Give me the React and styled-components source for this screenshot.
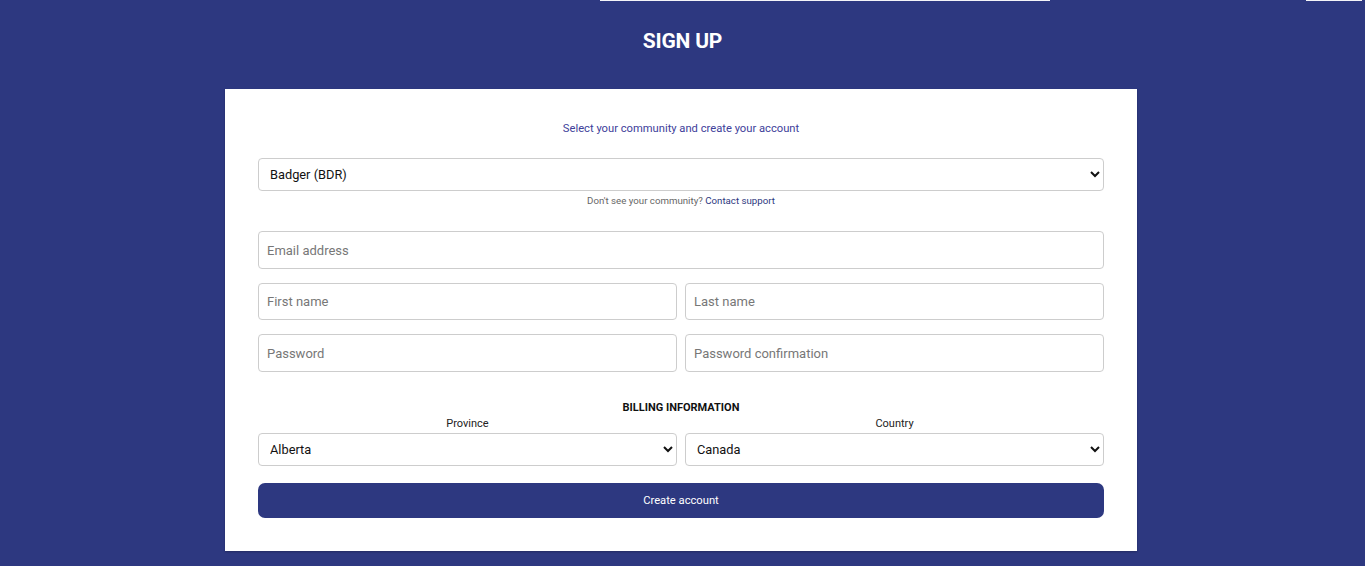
import React from "react";
import styled, { createGlobalStyle } from "styled-components";

const GlobalStyle = createGlobalStyle`
  html, body {
    margin: 0;
    padding: 0;
    background: #2d3880;
    font-family: Roboto, "Liberation Sans", sans-serif;
  }
`;

const Page = styled.div`
  min-height: 566px;
  background: #2d3880;
  display: flex;
  flex-direction: column;
  align-items: center;
`;

const TopEdge = styled.div`
  align-self: stretch;
  height: 1px;
  display: flex;
`;

const Edge = styled.span`
  width: ${(p) => p.$w}px;
  flex: ${(p) => (p.$w ? "none" : "1")};
  background: ${(p) => (p.$light ? "#f4f4f8" : "#2d3880")};
`;

const Title = styled.h1`
  margin: 0;
  padding-top: 28px;
  height: 88px;
  box-sizing: border-box;
  color: #fff;
  font-size: 21px;
  font-weight: 700;
  line-height: 24px;
  letter-spacing: -0.2px;
`;

const Card = styled.div`
  width: 912px;
  margin-right: 3px;
  box-sizing: border-box;
  background: #fff;
  padding: 33px;
  box-shadow: 0 1px 2px rgba(0, 0, 0, 0.25);
  display: flex;
  flex-direction: column;
`;

const Intro = styled.p`
  margin: 0 0 22px;
  text-align: center;
  font-size: 11.2px;
  line-height: 14px;
  color: #40409a;
`;

const Field = styled.select`
  width: 100%;
  height: 33px;
  box-sizing: border-box;
  border: 1px solid #cdcdcd;
  border-radius: 4px;
  background: #fff;
  padding: 0 7px;
  font-family: Roboto, "Liberation Sans", sans-serif;
  font-size: 12.8px;
  color: #111;
`;

const Hint = styled.p`
  margin: 4px 0 24px;
  text-align: center;
  font-size: 9.7px;
  line-height: 12px;
  color: #666;

  a {
    color: #2d3880;
    text-decoration: none;
  }
`;

const Input = styled.input`
  width: 100%;
  height: ${(p) => (p.$tall ? "38px" : "37px")};
  box-sizing: border-box;
  border: 1px solid #cdcdcd;
  border-radius: 4px;
  padding: 0 8px;
  font-family: Roboto, "Liberation Sans", sans-serif;
  font-size: 13px;
  color: #222;

  &::placeholder {
    color: #777;
  }
`;

const Stack = styled.div`
  display: flex;
  flex-direction: column;
  gap: 14px;
`;

const Pair = styled.div`
  display: grid;
  grid-template-columns: 1fr 1fr;
  gap: 8px;
`;

const Section = styled.h2`
  margin: 29px 0 2px;
  text-align: center;
  font-size: 11px;
  line-height: 14px;
  font-weight: 700;
  color: #111;
`;

const Column = styled.div`
  display: flex;
  flex-direction: column;
`;

const Label = styled.label`
  text-align: center;
  font-size: 11px;
  line-height: 13px;
  margin-bottom: 3px;
  color: #222;
`;

const Submit = styled.button`
  margin-top: 17px;
  height: 35px;
  border: 0;
  border-radius: 7px;
  background: #2d3880;
  color: #fff;
  font-family: Roboto, "Liberation Sans", sans-serif;
  font-size: 11.2px;
  cursor: pointer;
`;

export default function App() {
  return (
    <>
      <GlobalStyle />
      <Page>
        <TopEdge>
          <Edge $w={600} />
          <Edge $w={450} $light />
          <Edge $w={256} />
          <Edge $w={56} $light />
          <Edge />
        </TopEdge>
        <Title>SIGN UP</Title>
        <Card>
          <Intro>Select your community and create your account</Intro>
          <Field defaultValue="BDR">
            <option value="BDR">Badger (BDR)</option>
          </Field>
          <Hint>
            Don't see your community? <a href="#">Contact support</a>
          </Hint>
          <Stack>
            <Input $tall placeholder="Email address" />
            <Pair>
              <Input placeholder="First name" />
              <Input placeholder="Last name" />
            </Pair>
            <Pair>
              <Input $tall placeholder="Password" type="password" />
              <Input $tall placeholder="Password confirmation" type="password" />
            </Pair>
          </Stack>
          <Section>BILLING INFORMATION</Section>
          <Pair>
            <Column>
              <Label>Province</Label>
              <Field defaultValue="AB">
                <option value="AB">Alberta</option>
              </Field>
            </Column>
            <Column>
              <Label>Country</Label>
              <Field defaultValue="CA">
                <option value="CA">Canada</option>
              </Field>
            </Column>
          </Pair>
          <Submit>Create account</Submit>
        </Card>
      </Page>
    </>
  );
}
